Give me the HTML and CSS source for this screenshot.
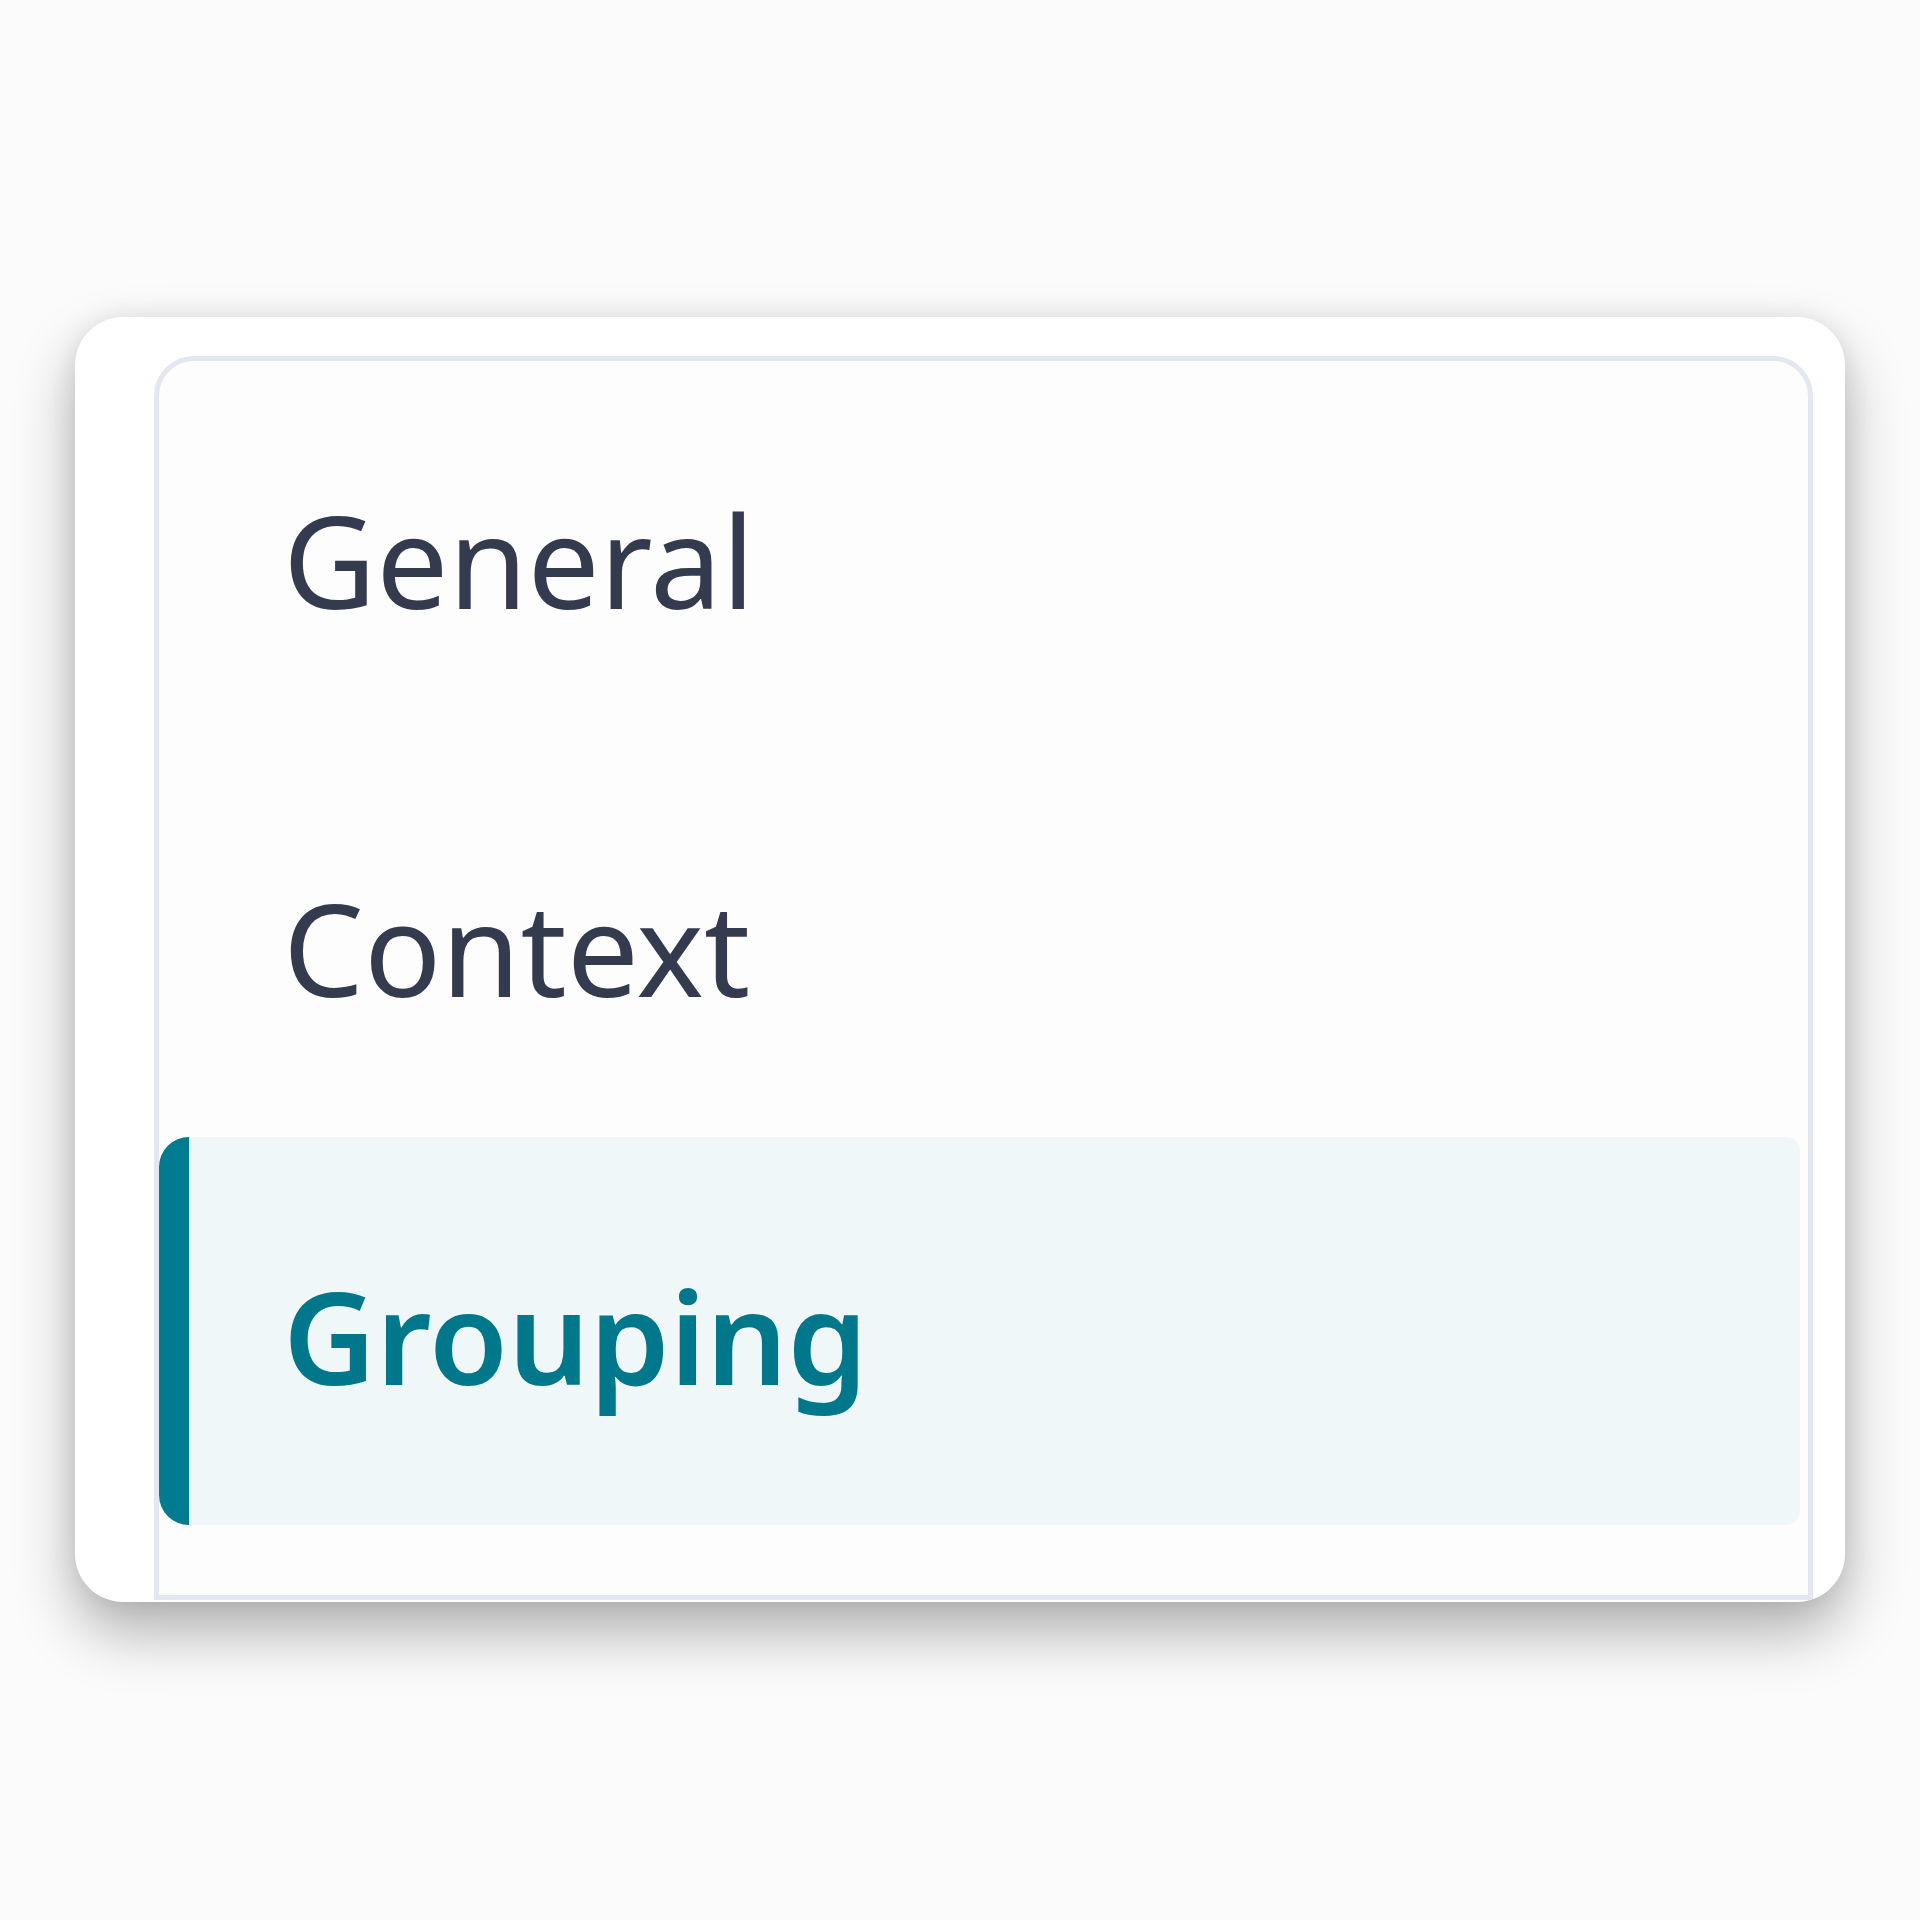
FILE: index.html
```html
<!DOCTYPE html>
<html lang="en">
<head>
<meta charset="utf-8">
<title>Settings navigation</title>
<link rel="stylesheet" href="styles.css">
</head>
<body>
  <div class="stage">
    <div class="card">
      <nav class="panel">
        <ul class="nav-list">
          <li class="nav-item">General</li>
          <li class="nav-item">Context</li>
          <li class="nav-item is-active">Grouping</li>
        </ul>
      </nav>
    </div>
  </div>
</body>
</html>
```

FILE: styles.css
```css
html, body {
  margin: 0;
  padding: 0;
  background: #fbfbfb;
}

body {
  font-family: "Noto Sans", "Open Sans", "Liberation Sans", sans-serif;
  width: 1920px;
  height: 1920px;
  overflow: hidden;
}

.stage {
  padding-top: 317px;
  padding-left: 75px;
}

.card {
  width: 1770px;
  height: 1285px;
  box-sizing: border-box;
  background: #ffffff;
  border-radius: 48px;
  overflow: hidden;
  padding: 39px 32px 0 79px;
  box-shadow: 0 30px 60px rgba(0, 0, 0, 0.3), 0 0 26px rgba(0, 0, 0, 0.08);
}

.panel {
  height: 1244px;
  box-sizing: border-box;
  border: 5px solid #e2e7f0;
  border-radius: 40px 40px 0 0;
  background: #fdfdfe;
  padding-right: 8px;
}

.nav-list {
  list-style: none;
  margin: 0;
  padding: 0;
}

.nav-item {
  height: 388px;
  box-sizing: border-box;
  display: flex;
  align-items: center;
  padding: 10px 0 0 94px;
  border-left: 30px solid transparent;
  border-radius: 30px 14px 14px 30px;
  font-size: 128px;
  line-height: 1;
  color: #353b4f;
  font-weight: 400;
}

.nav-item.is-active {
  background: #eff7f9;
  border-left-color: #007b8f;
  color: #00778b;
  font-weight: 600;
}
```
